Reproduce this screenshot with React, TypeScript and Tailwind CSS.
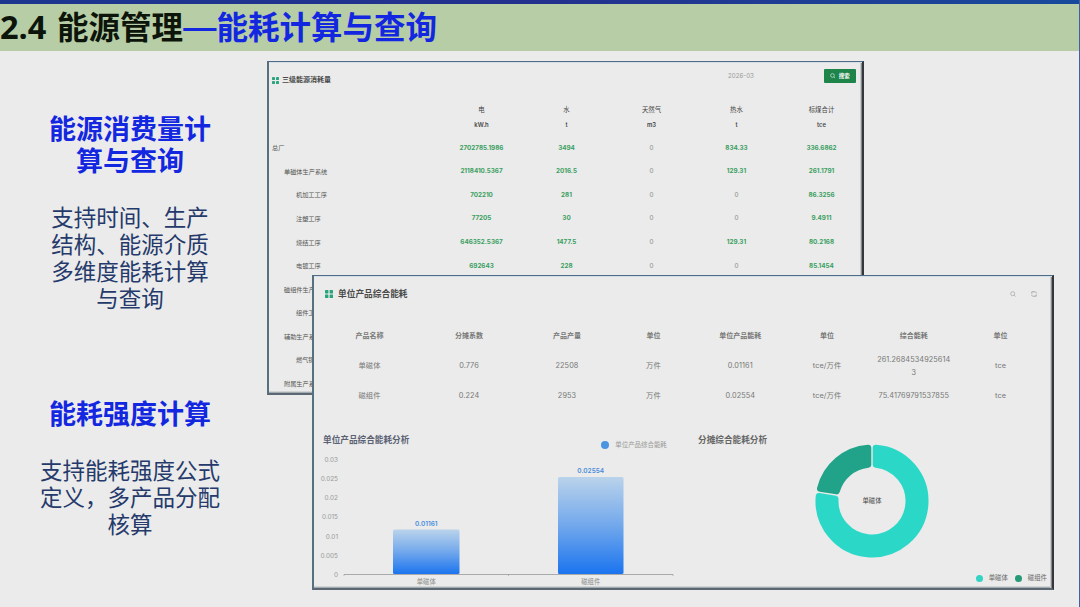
import type { ReactNode } from "react";
import clsx from "clsx";

type EnergyRow = {
  name: string;
  level: 0 | 1 | 2;
  values: string[];
};

const energyColumns = [
  { label: "电", unit: "kW.h" },
  { label: "水", unit: "t" },
  { label: "天然气", unit: "m3" },
  { label: "热水", unit: "t" },
  { label: "标煤合计", unit: "tce" },
];

const energyRows: EnergyRow[] = [
  { name: "总厂", level: 0, values: ["2702785.1986", "3494", "0", "834.33", "336.6862"] },
  { name: "单磁体生产系统", level: 1, values: ["2118410.5367", "2016.5", "0", "129.31", "261.1791"] },
  { name: "机加工工序", level: 2, values: ["702210", "281", "0", "0", "86.3256"] },
  { name: "注塑工序", level: 2, values: ["77205", "30", "0", "0", "9.4911"] },
  { name: "烧结工序", level: 2, values: ["646352.5367", "1477.5", "0", "129.31", "80.2168"] },
  { name: "电镀工序", level: 2, values: ["692643", "228", "0", "0", "85.1454"] },
  { name: "磁组件生产", level: 1, values: [] },
  { name: "组件工", level: 2, values: [] },
  { name: "辅助生产系", level: 1, values: [] },
  { name: "燃气锅", level: 2, values: [] },
  { name: "附属生产系", level: 1, values: [] },
];

const indent = { 0: "pl-[3px]", 1: "pl-[15px]", 2: "pl-[27px]" };

const productColumns = ["产品名称", "分摊系数", "产品产量", "单位", "单位产品能耗", "单位", "综合能耗", "单位"];

const productRows = [
  ["单磁体", "0.776", "22508", "万件", "0.01161", "tce/万件", "261.26845349256143", "tce"],
  ["磁组件", "0.224", "2953", "万件", "0.02554", "tce/万件", "75.41769791537855", "tce"],
];

const yTicks = ["0.03", "0.025", "0.02", "0.015", "0.01", "0.005", "0"];

// Bar geometry is in chart pixels, baseline at y=122
const bars = [
  { name: "单磁体", value: "0.01161", x: 79, width: 66.5, height: 44.5 },
  { name: "磁组件", value: "0.02554", x: 244, width: 65.5, height: 97 },
];

// Ring segment with straight edges held `pad` px away from the radial lines
function segment(from: number, to: number) {
  const outer = 53.3;
  const inner = 36.7;
  const pad = 3.9;
  const at = (r: number, deg: number, side: number) => {
    const a = (deg * Math.PI) / 180 + side * Math.asin(pad / r);
    return `${(58 + r * Math.sin(a)).toFixed(2)} ${(58 - r * Math.cos(a)).toFixed(2)}`;
  };
  const large = to - from > 180 ? 1 : 0;
  return [
    `M${at(outer, from, 1)}`,
    `A${outer} ${outer} 0 ${large} 1 ${at(outer, to, -1)}`,
    `L${at(inner, to, -1)}`,
    `A${inner} ${inner} 0 ${large} 0 ${at(inner, from, 1)}`,
    "Z",
  ].join(" ");
}

function GridMark({ className }: { className: string }) {
  return (
    <svg viewBox="0 0 8 8" className={className} aria-hidden="true">
      <rect width="3.4" height="3.4" rx="0.5" fill="#2ba37d" />
      <rect x="4.6" width="3.4" height="3.4" rx="0.5" fill="#2ba37d" />
      <rect y="4.6" width="3.4" height="3.4" rx="0.5" fill="#2ba37d" />
      <rect x="4.6" y="4.6" width="3.4" height="3.4" rx="0.5" fill="#2ba37d" />
    </svg>
  );
}

function SearchMark({ className }: { className: string }) {
  return (
    <svg viewBox="0 0 8 8" className={className} fill="none" stroke="currentColor" strokeWidth="0.8" aria-hidden="true">
      <circle cx="3.6" cy="3.6" r="2.7" />
      <path d="M5.7 5.7 7.4 7.4" />
    </svg>
  );
}

function Window({ className, children }: { className: string; children: ReactNode }) {
  return (
    <section
      className={clsx(
        "overflow-hidden border-t-[1.5px] border-r-2 border-b-2 border-l-2 border-t-[#4f6b85] border-r-[#34383d] border-b-[#5b6874] border-l-[#56707f] bg-[#eaebea] shadow-[inset_0_1px_0_#d3e0ea,inset_-1px_0_0_#85898c,inset_-2px_0_0_#c9cbcb,inset_0_-1px_0_#a3abb0,inset_0_-2px_0_#d0d4d5]",
        className
      )}
    >
      {children}
    </section>
  );
}

function EnergyTable() {
  return (
    <Window className="ml-[7px] h-[334px] w-[597px]">
      <div className="flex h-[36px] items-center pl-[3px] pr-[6px]">
        <GridMark className="size-[7px]" />
        <h3 className="ml-[3px] text-[7px] font-bold text-[#4a4a4a]">三级能源消耗量</h3>
        <div className="mb-[8px] ml-auto flex items-center">
          <span className="w-[96px] text-[6.2px] text-[#999]">2026-03</span>
          <button className="flex h-[14px] w-[32px] items-center justify-center gap-[3px] rounded-[1px] bg-[#1f8449] text-[5.5px] font-bold text-white">
            <SearchMark className="size-[5.5px]" />
            搜索
          </button>
        </div>
      </div>

      <div className="grid grid-cols-[170px_repeat(5,85px)] pt-[4px] text-center text-[6.4px] text-[#444]">
        <span />
        {energyColumns.map(({ label, unit }) => (
          <div key={label} className="flex flex-col">
            <span className="h-[15px] leading-[16px]">{label}</span>
            <span className="h-[15px] text-[5.9px] font-semibold leading-[15px]">{unit}</span>
          </div>
        ))}
      </div>

      <div className="pt-[4px]">
        {energyRows.map(({ name, level, values }) => (
          <div key={name} className="grid h-[23.6px] grid-cols-[170px_repeat(5,85px)] items-center text-[6.2px]">
            <span className={clsx("whitespace-nowrap text-[#555]", indent[level])}>{name}</span>
            {values.map((value, i) => (
              <span
                key={i}
                className={clsx("pt-px text-center text-[6.3px]", value === "0" ? "text-[#888]" : "font-bold text-[#3b9f62]")}
              >
                {value}
              </span>
            ))}
          </div>
        ))}
      </div>
    </Window>
  );
}

function BarChart() {
  return (
    <svg width="375" height="136" viewBox="0 0 375 136" className="block">
      <defs>
        <linearGradient id="bar" x1="0" y1="0" x2="0" y2="1">
          <stop offset="0" stopColor="#bad3eb" />
          <stop offset="0.5" stopColor="#72a8ec" />
          <stop offset="1" stopColor="#1b74ef" />
        </linearGradient>
      </defs>
      {yTicks.map((tick, i) => (
        <text key={tick} x="24" y={10.3 + i * 19.05} fontSize="6.4" fill="#999" textAnchor="end">
          {tick}
        </text>
      ))}
      <path d="M30 123.8V122.5H359V123.8M194.5 122.5V123.8" fill="none" stroke="#999" strokeWidth="0.8" />
      {bars.map(({ name, value, x, width, height }) => (
        <g key={name} textAnchor="middle">
          <rect x={x} y={122 - height} width={width} height={height} rx="1.5" fill="url(#bar)" />
          <text x={x + width / 2} y={118 - height} fontSize="6.5" fontWeight="600" fill="#4a8bdc">
            {value}
          </text>
          <text x={x + width / 2} y="132" fontSize="6.3" fill="#888">
            {name}
          </text>
        </g>
      ))}
    </svg>
  );
}

function DonutChart() {
  return (
    <svg width="116" height="116" viewBox="0 0 116 116" className="block" strokeWidth="6.4" strokeLinejoin="round">
      <path d={segment(0, 279.4)} fill="#2bd8c8" stroke="#2bd8c8" />
      <path d={segment(279.4, 360)} fill="#20a389" stroke="#20a389" />
      <text x="58" y="60.4" fontSize="6.4" fill="#444" textAnchor="middle" stroke="none">
        单磁体
      </text>
    </svg>
  );
}

function ProductWindow() {
  return (
    <Window className="relative -mt-[120px] ml-[52px] h-[315px] w-[742px]">
      <div className="flex h-[36px] items-center pl-[11px] pr-[15px]">
        <GridMark className="size-[8px]" />
        <h3 className="ml-[5px] pt-px text-[8.7px] font-bold text-[#4a4a4a]">单位产品综合能耗</h3>
        <SearchMark className="ml-auto size-[6px] text-[#999]" />
        <svg viewBox="0 0 6 6" className="ml-[15px] size-[6px]" fill="none" stroke="#999" strokeWidth="0.8">
          <path d="M.8 2.6V.8H4.6M5.2 1.2V2.3M5.2 3.4V5.2H1.4M.8 4.8V3.7" />
        </svg>
      </div>

      <div className="pl-[11px] pt-[9.5px] text-center text-[7.3px]">
        <div className="grid h-[30px] grid-cols-[89px_110px_86px_87px_86.5px_87px_86.5px_87px] items-center text-[7px] font-bold text-[#777]">
          {productColumns.map((label, i) => (
            <span key={i}>{label}</span>
          ))}
        </div>
        {productRows.map((row) => (
          <div
            key={row[0]}
            className="grid h-[30px] grid-cols-[89px_110px_86px_87px_86.5px_87px_86.5px_87px] items-center leading-[12.5px] tracking-[0.1px] text-[#777]"
          >
            {row.map((cell, i) => (
              <span key={i} className="break-all px-[6px]">
                {cell}
              </span>
            ))}
          </div>
        ))}
      </div>

      <div className="flex pt-[22.5px]">
        <div className="w-[376px]">
          <div className="flex h-[18px] items-start pl-[9px]">
            <h4 className="text-[8.65px] font-bold leading-[12px] text-[#5a6173]">单位产品综合能耗分析</h4>
            <div className="ml-[192px] flex items-center pt-[5.5px] text-[6.45px] leading-[10px] text-[#999]">
              <span className="mr-[6px] size-[8px] rounded-full bg-[#4a94e0]" />
              单位产品综合能耗
            </div>
          </div>
          <BarChart />
        </div>
        <div className="w-[360px]">
          <h4 className="pl-[8px] text-[8.65px] font-bold leading-[12px] text-[#666]">分摊综合能耗分析</h4>
          <div className="-mt-[3.5px] pl-[123.5px]">
            <DonutChart />
          </div>
          <div className="flex items-center justify-end pr-[3px] pt-[13.5px] text-[6.4px] leading-[12px] text-[#666]">
            <span className="mr-[6px] size-[7px] rounded-full bg-[#35d3c3]" />
            单磁体
            <span className="ml-[7px] mr-[6px] size-[7px] rounded-full bg-[#269a77]" />
            磁组件
          </div>
        </div>
      </div>
    </Window>
  );
}

function Topic({ title, className, children }: { title: string; className: string; children: ReactNode }) {
  return (
    <div className={clsx("text-center", className)}>
      <h2 className="mx-auto w-[164px] text-[27px] font-bold leading-[32px] text-[#1327e0]">{title}</h2>
      <p className="mx-auto mt-[27px] text-[22.5px] leading-[27px] text-[#253a6b]">{children}</p>
    </div>
  );
}

export default function App() {
  return (
    <div className="h-[607px] w-[1080px] overflow-hidden border-r border-[#3f62a6] bg-[#ebebeb] font-['Inter','Noto_Sans_CJK_SC',sans-serif]">
      <div className="h-[4px] bg-linear-to-r from-[#1c3690] via-[#22308e] to-[#174a9c]" />
      <header className="h-[47px] bg-[#b6cda5]">
        <h1 className="flex items-center whitespace-pre font-['Open_Sans','Noto_Sans_CJK_SC',sans-serif] text-[31.5px] font-bold leading-[46px] text-[#0d150b]">
          <span className="w-[57px] text-[32.5px]">2.4</span>
          <span>能源管理</span>
          <span className="flex items-center text-[#1327e0]">
            <span className="w-[33.5px] -translate-y-[2px] scale-x-[1.3] text-center font-['Noto_Sans_CJK_SC']">—</span>
            能耗计算与查询
          </span>
        </h1>
      </header>

      <main className="flex">
        <aside className="w-[260px] shrink-0 font-['Open_Sans','Noto_Sans_CJK_SC',sans-serif]">
          <Topic title="能源消费量计算与查询" className="pt-[62px]">
            支持时间、生产
            <br />
            结构、能源介质
            <br />
            多维度能耗计算
            <br />
            与查询
          </Topic>
          <Topic title="能耗强度计算" className="pt-[86px]">
            支持能耗强度公式
            <br />
            定义，多产品分配
            <br />
            核算
          </Topic>
        </aside>
        <div className="flex-1 pt-[10px]">
          <EnergyTable />
          <ProductWindow />
        </div>
      </main>
    </div>
  );
}
